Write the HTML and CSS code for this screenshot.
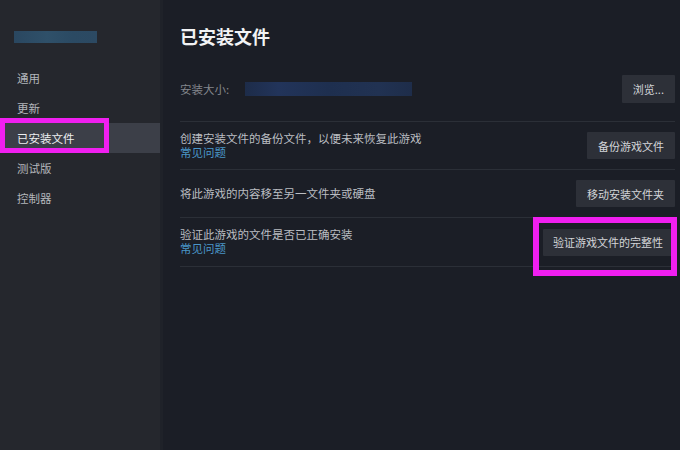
FILE: index.html
```html
<!DOCTYPE html>
<html lang="zh-CN">
<head>
<meta charset="utf-8">
<title>已安装文件</title>
<link rel="stylesheet" href="styles.css">
</head>
<body>
<div class="app">
  <aside class="sidebar">
    <div class="game-name"></div>
    <nav class="nav">
      <div class="nav-item">通用</div>
      <div class="nav-item">更新</div>
      <div class="nav-item active">已安装文件<span class="mark mark-nav"></span></div>
      <div class="nav-item">测试版</div>
      <div class="nav-item">控制器</div>
    </nav>
  </aside>
  <main class="main">
    <h1 class="title">已安装文件</h1>
    <div class="row row-first">
      <div class="size">
        <span class="size-label">安装大小:</span>
        <span class="size-value"></span>
      </div>
      <button class="btn">浏览...</button>
    </div>
    <div class="row">
      <div class="desc">
        <div>创建安装文件的备份文件，以便未来恢复此游戏</div>
        <a class="link">常见问题</a>
      </div>
      <button class="btn">备份游戏文件</button>
    </div>
    <div class="row">
      <div class="desc">
        <div>将此游戏的内容移至另一文件夹或硬盘</div>
      </div>
      <button class="btn">移动安装文件夹</button>
    </div>
    <div class="row">
      <div class="desc">
        <div>验证此游戏的文件是否已正确安装</div>
        <a class="link">常见问题</a>
      </div>
      <div class="btn-wrap">
        <button class="btn btn-verify">验证游戏文件的完整性</button>
        <span class="mark mark-btn"></span>
      </div>
    </div>
  </main>
</div>
</body>
</html>
```

FILE: styles.css
```css
* { box-sizing: border-box; }
html, body { margin: 0; padding: 0; }
body {
  width: 680px;
  height: 450px;
  overflow: hidden;
  background: #1b1e26;
  font-family: "Noto Sans CJK SC", "Noto Sans", sans-serif;
  color: #b9bcc1;
}
.app {
  display: flex;
  height: 450px;
}
.sidebar {
  width: 163px;
  flex: none;
  background: #25272d;
  border-right: 3px solid #1f2229;
  padding-top: 31px;
}
.game-name {
  margin-left: 14px;
  width: 83px;
  height: 12px;
  background: linear-gradient(90deg, #2a4760 0%, #2f5069 40%, #2b4a63 70%, #2c4962 100%);
}
.nav {
  margin-top: 20px;
  display: flex;
  flex-direction: column;
}
.nav-item {
  position: relative;
  height: 30px;
  line-height: 30px;
  padding-left: 17px;
  font-size: 11.5px;
  color: #b3b6bb;
}
.nav-item.active {
  background: #3c3f48;
  color: #eceef0;
}
.mark {
  position: absolute;
  border: 5px solid #f01ff0;
  pointer-events: none;
}
.mark-nav {
  left: 0;
  top: -5px;
  width: 109px;
  height: 35px;
}
.main {
  flex: 1;
  padding: 24px 5px 0 17px;
}
.title {
  margin: 0 0 17px 0;
  font-size: 18px;
  line-height: 24px;
  font-weight: 700;
  color: #f2f3f5;
}
.row {
  display: flex;
  align-items: center;
  justify-content: space-between;
  padding: 10px 0;
  border-bottom: 1px solid #2b2f37;
}
.row-first {
  padding: 10px 0 18px 0;
}
.size {
  display: flex;
  align-items: center;
}
.size-label {
  font-size: 11.5px;
  color: #83868c;
  width: 65px;
}
.size-value {
  display: inline-block;
  width: 167px;
  height: 14px;
  background: linear-gradient(90deg, #1d2c49 0%, #22345a 20%, #1e2f4f 50%, #213252 80%, #1e2d4a 100%);
}
.desc {
  font-size: 11.5px;
  line-height: 13.5px;
  color: #babdc2;
}
.link {
  display: block;
  color: #4a96c8;
}
.btn {
  height: 27px;
  padding: 0 11px;
  border: none;
  border-radius: 1px;
  background: #2d3038;
  color: #d3d5d8;
  font-family: "Noto Sans CJK SC", "Noto Sans", sans-serif;
  font-size: 11px;
}
.row-first .btn {
  height: 28px;
}
.btn-verify {
  padding: 0 10px;
}
.btn-wrap {
  position: relative;
  margin-right: 2px;
}
.mark-btn {
  left: -10px;
  top: -11px;
  right: -4px;
  bottom: -20px;
  border-width: 6px;
}
```
